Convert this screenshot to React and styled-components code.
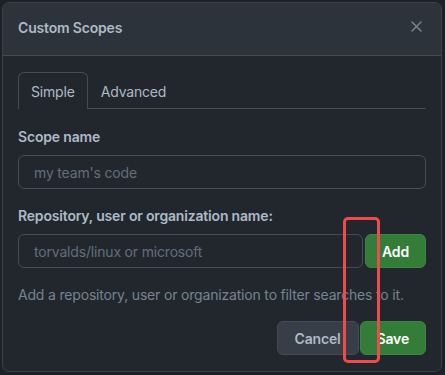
import React from "react";
import styled, { createGlobalStyle } from "styled-components";

const Global = createGlobalStyle`
  html, body { margin: 0; padding: 0; background: #1c2128; }
  body { font-family: Inter, "Noto Sans", "Liberation Sans", sans-serif; -webkit-font-smoothing: antialiased; letter-spacing: -0.18px; }
  * { box-sizing: border-box; }
`;

const Page = styled.div`
  width: 445px;
  height: 375px;
  padding: 2px;
  position: relative;
  background: #1c2128;
`;

const Dialog = styled.div`
  width: 440px;
  height: 370px;
  border: 1px solid #3a4149;
  border-radius: 7px;
  overflow: hidden;
  background: #22272e;
  display: flex;
  flex-direction: column;
`;

const Header = styled.div`
  height: 53px;
  flex: none;
  display: flex;
  align-items: center;
  justify-content: space-between;
  padding: 0 15px 3px 15px;
  background: #2d333b;
  border-bottom: 1px solid #444c56;
`;

const Title = styled.h1`
  margin: 0;
  font-size: 14px;
  font-weight: 600;
  color: #adbac7;
`;

const CloseButton = styled.button`
  background: none;
  border: none;
  padding: 0;
  margin-right: 2px;
  width: 16px;
  height: 16px;
  display: flex;
  align-items: center;
  justify-content: center;
  color: #768390;
  margin-top: -2px;
`;

const Body = styled.div`
  padding: 16px 15px 0 15px;
  display: flex;
  flex-direction: column;
`;

const TabList = styled.div`
  display: flex;
  border-bottom: 1px solid #444c56;
  height: 37px;
`;

const Tab = styled.div`
  height: 37px;
  padding: 0 12px;
  display: flex;
  align-items: center;
  font-size: 14px;
  color: #adbac7;
  border: 1px solid ${(p) => (p.$active ? "#444c56" : "transparent")};
  border-bottom: none;
  border-radius: 6px 6px 0 0;
  background: ${(p) => (p.$active ? "#22272e" : "transparent")};
  margin-bottom: -1px;
`;

const Label = styled.div`
  font-size: 14px;
  font-weight: 600;
  color: #adbac7;
  margin: ${(p) => p.$top}px 0 8px 0;
  line-height: 20px;
`;

const Input = styled.div`
  height: 34px;
  flex: 1 0 auto;
  border: 1px solid #444c56;
  border-radius: 6px;
  background: #22272e;
  padding: 0 15px;
  display: flex;
  align-items: center;
  font-size: 14px;
  color: #636e7b;
`;

const Row = styled.div`
  display: flex;
  gap: 2px;
`;

const Button = styled.button`
  height: 34px;
  padding: 0 ${(p) => p.$px}px;
  border-radius: 6px;
  font-family: inherit;
  letter-spacing: inherit;
  font-size: 14px;
  font-weight: 600;
  border: 1px solid ${(p) => (p.$primary ? "#3b8640" : "#444c56")};
  background: ${(p) => (p.$primary ? "#347d39" : "#373e47")};
  color: ${(p) => (p.$primary ? "#ffffff" : "#adbac7")};
  display: flex;
  align-items: center;
  justify-content: center;
`;

const Hint = styled.p`
  margin: 17px 0 0 0;
  font-size: 14px;
  line-height: 20px;
  color: #768390;
`;

const Footer = styled.div`
  display: flex;
  justify-content: flex-end;
  gap: 1px;
  margin-top: 16px;
`;

const Annotation = styled.div`
  position: absolute;
  left: 343px;
  top: 217px;
  width: 37px;
  height: 146px;
  border: 3px solid #ef4b4b;
  border-radius: 5px;
  pointer-events: none;
`;

export default function App() {
  return (
    <>
      <Global />
      <Page>
        <Dialog>
          <Header>
            <Title>Custom Scopes</Title>
            <CloseButton aria-label="Close">
              <svg width="11" height="11" viewBox="0 0 11 11">
                <path d="M1 1L10 10M10 1L1 10" stroke="currentColor" strokeWidth="1.5" strokeLinecap="round" />
              </svg>
            </CloseButton>
          </Header>
          <Body>
            <TabList>
              <Tab $active>Simple</Tab>
              <Tab>Advanced</Tab>
            </TabList>
            <Label $top={18}>Scope name</Label>
            <Input>my team's code</Input>
            <Label $top={17}>Repository, user or organization name:</Label>
            <Row>
              <Input>torvalds/linux or microsoft</Input>
              <Button $primary $px={16}>Add</Button>
            </Row>
            <Hint>Add a repository, user or organization to filter searches to it.</Hint>
            <Footer>
              <Button $px={17}>Cancel</Button>
              <Button $primary $px={16}>Save</Button>
            </Footer>
          </Body>
        </Dialog>
        <Annotation />
      </Page>
    </>
  );
}
